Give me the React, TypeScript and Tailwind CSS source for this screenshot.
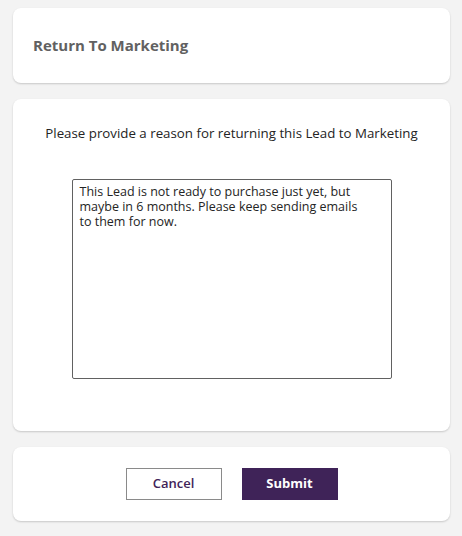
import React from "react";

export default function App() {
  return (
    <div
      className="min-h-[536px] w-[462px] bg-[#f3f3f3]"
      style={{ fontFamily: '"Open Sans", "Noto Sans", sans-serif' }}
    >
      <div className="flex flex-col gap-4 pl-[13px] pr-[12px] pt-2 pb-[15px]">
        <div className="h-[75px] bg-white rounded-lg shadow-[0_1px_2px_rgba(0,0,0,0.18)] flex items-center px-5">
          <h1 className="text-[15px] font-bold text-[#616161]">Return To Marketing</h1>
        </div>
        <div className="h-[332px] bg-white rounded-lg shadow-[0_1px_2px_rgba(0,0,0,0.18)] flex flex-col items-center pt-[24px]">
          <p className="text-[13.3px] text-[#242424] leading-[20px]">
            Please provide a reason for returning this Lead to Marketing
          </p>
          <textarea
            className="mt-[36px] w-[320px] h-[200px] border border-[#616161] rounded-[2px] pl-[7px] pr-[18px] py-[4px] text-[12.5px] leading-[15px] text-[#242424] resize-none outline-none"
            defaultValue="This Lead is not ready to purchase just yet, but maybe in 6 months. Please keep sending emails to them for now."
          />
        </div>
        <div className="h-[74px] bg-white rounded-lg shadow-[0_1px_2px_rgba(0,0,0,0.18)] flex items-center justify-center gap-5">
          <button className="w-[96px] h-[32px] border border-[#8a8a8a] bg-white text-[#3f2358] text-[13px] font-semibold">
            Cancel
          </button>
          <button className="w-[96px] h-[32px] bg-[#3f2358] text-white text-[13px] font-bold">
            Submit
          </button>
        </div>
      </div>
    </div>
  );
}
